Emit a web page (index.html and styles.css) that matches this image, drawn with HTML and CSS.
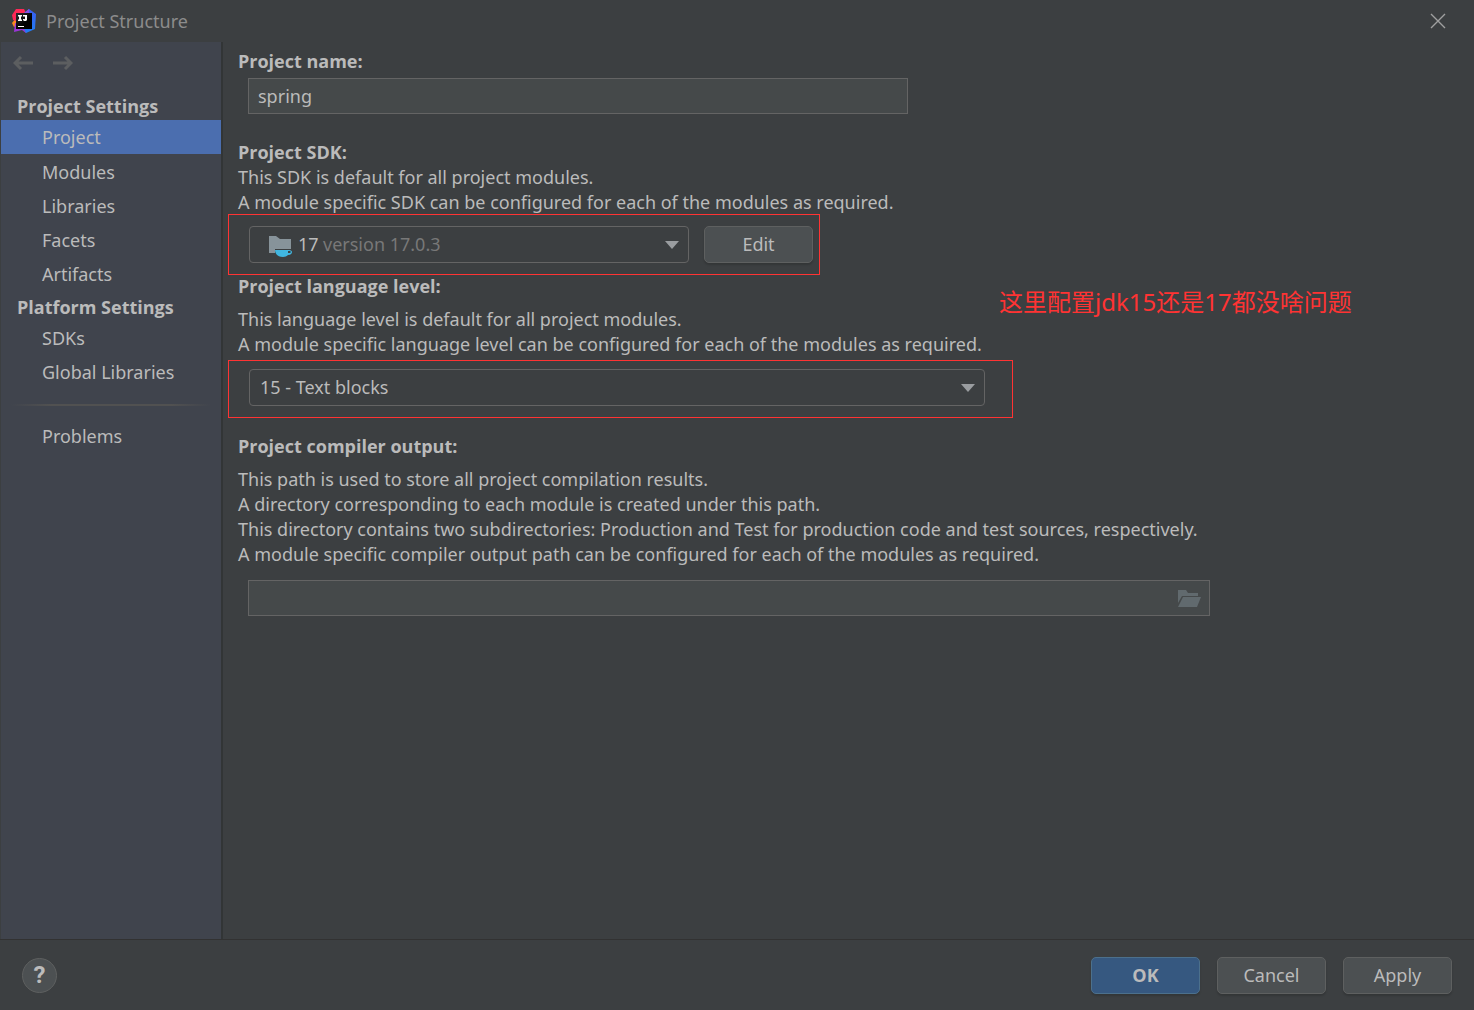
FILE: index.html
```html
<!DOCTYPE html>
<html lang="en">

<head>
    <meta charset="UTF-8">
    <meta name="viewport" content="width=device-width, initial-scale=1.0">
    <title>Project Structure</title>
    <link rel="stylesheet" href="styles.css">
</head>

<body>

    <div class="dialog">
        <header class="titlebar">
            <svg class="logo" viewBox="0 0 24 24" aria-hidden="true">
                <defs>
                    <linearGradient id="logo-blue" x1="0" y1="0" x2="0" y2="1">
                        <stop offset="0" stop-color="#3b5cf0"/>
                        <stop offset="1" stop-color="#1f7df5"/>
                    </linearGradient>
                    <linearGradient id="logo-dark" x1="0" y1="0" x2="1" y2="1">
                        <stop offset="0" stop-color="#2c2c30"/>
                        <stop offset="0.6" stop-color="#000000"/>
                    </linearGradient>
                </defs>
                <path fill="#fb8b1c" d="M4 9 0 14 2 18 6 16z"/>
                <path fill="#fe2857" d="M4 0h8l3 6-9 7-5-2L0 6z"/>
                <path fill="#9a35d6" d="M3 14 2 23 10 21 14 24 18 16z"/>
                <path fill="url(#logo-blue)" d="M17 0 24 5 23 20 14 24 11 18 12 4z"/>
                <path fill="#8a4fe0" d="M17 0 11 5 17 6z"/>
                <rect x="4" y="4" width="16" height="16" fill="url(#logo-dark)"/>
                <path fill="#fff" d="M6 6h4v1.500H9v3h1V12H6v-1.500h1v-3H6zM11 6h4v5l-1 1h-2l-1-1v-1h1.500l.5.5V7.500h-2zM6 17h6v1H6z"/>
            </svg>
            <h1 class="title">Project Structure</h1>
            <button class="close" aria-label="Close">
                <svg viewBox="0 0 16 16" width="16" height="16"><path d="M1 1 15 15M15 1 1 15"/></svg>
            </button>
        </header>

        <div class="body">
            <nav class="sidebar">
                <div class="history">
                    <button aria-label="Back">
                        <svg viewBox="0 0 20 16" width="20" height="16"><path d="M20 8H2M8 2 2 8l6 6"/></svg>
                    </button>
                    <button aria-label="Forward">
                        <svg viewBox="0 0 20 16" width="20" height="16"><path d="M0 8h18M12 2l6 6-6 6"/></svg>
                    </button>
                </div>
                <h2>Project Settings</h2>
                <ul>
                    <li><a href="#" class="current">Project</a></li>
                    <li><a href="#">Modules</a></li>
                    <li><a href="#">Libraries</a></li>
                    <li><a href="#">Facets</a></li>
                    <li><a href="#">Artifacts</a></li>
                </ul>
                <h2>Platform Settings</h2>
                <ul>
                    <li><a href="#">SDKs</a></li>
                    <li><a href="#">Global Libraries</a></li>
                </ul>
                <hr>
                <ul>
                    <li><a href="#">Problems</a></li>
                </ul>
            </nav>

            <main class="content">
                <section class="group">
                    <label class="heading" for="name">Project name:</label>
                    <input class="field name" id="name" type="text" value="spring">
                </section>

                <section class="group group-sdk">
                    <label class="heading" for="sdk">Project SDK:</label>
                    <p>This SDK is default for all project modules.<br>
                        A module specific SDK can be configured for each of the modules as required.</p>
                    <div class="marked marked-sdk">
                        <div class="combo combo-sdk">
                            <select id="sdk">
                                <option>17</option>
                            </select>
                            <span class="sdk-icon">
                                <svg viewBox="0 0 24 22" width="24" height="22" aria-hidden="true">
                                    <path fill="#87939a" d="M0 0h7l4 3h11v10H6v4H0z"/>
                                    <path fill="#40b6e0" fill-rule="evenodd" d="M6 14h14c2 0 3 1 3 2s-1 3-4 3c-1 1-3 2-5 2-5 0-8-3-8-7zm13 1v2h2l1-1-1-1z"/>
                                </svg>
                            </span>
                            <span class="sdk-version">version 17.0.3</span>
                            <svg class="arrow" viewBox="0 0 14 8" width="14" height="8"><path d="M0 0h14L7 8z"/></svg>
                        </div>
                        <button class="btn">Edit</button>
                    </div>
                </section>

                <section class="group group-level">
                    <label class="heading" for="level">Project language level:</label>
                    <p class="spaced">This language level is default for all project modules.<br>
                        A module specific language level can be configured for each of the modules as required.</p>
                    <div class="marked marked-level">
                        <div class="combo combo-level">
                            <select id="level">
                                <option>15 - Text blocks</option>
                            </select>
                            <svg class="arrow" viewBox="0 0 14 8" width="14" height="8"><path d="M0 0h14L7 8z"/></svg>
                        </div>
                    </div>
                </section>

                <section class="group group-output">
                    <label class="heading" for="output">Project compiler output:</label>
                    <p class="spaced">This path is used to store all project compilation results.<br>
                        A directory corresponding to each module is created under this path.<br>
                        This directory contains two subdirectories: Production and Test for production code and test sources, respectively.<br>
                        A module specific compiler output path can be configured for each of the modules as required.</p>
                    <div class="field path">
                        <input id="output" type="text">
                        <button class="browse" aria-label="Browse">
                            <svg viewBox="0 0 23 17" width="23" height="17"><path d="M0 0h8l2 3h10v3H4L0 13zM5 7h18l-4 10H0z"/></svg>
                        </button>
                    </div>
                </section>

                <div class="note" lang="zh">这里配置jdk15还是17都没啥问题</div>
            </main>
        </div>

        <footer class="footer">
            <button class="help" aria-label="Help">?</button>
            <div class="actions">
                <button class="btn btn-primary">OK</button>
                <button class="btn">Cancel</button>
                <button class="btn">Apply</button>
            </div>
        </footer>
    </div>

</body>

</html>
```
FILE: styles.css
```css
* {
    box-sizing: border-box;
}

body {
    margin: 0;
    background-color: #3c3f41;
    color: #bbbbbb;
    font-family: "Noto Sans", "Noto Sans CJK SC", sans-serif;
    font-size: 18px;
    line-height: 25px;
}

button,
input,
select {
    margin: 0;
    padding: 0;
    border: none;
    background: none;
    color: inherit;
    font: inherit;
}

svg {
    display: block;
}

.dialog {
    display: flex;
    flex-direction: column;
    min-height: 100vh;
}

/* Title bar */
.titlebar {
    display: flex;
    align-items: center;
    height: 42px;
    padding: 0 28px 0 12px;
}

.logo {
    width: 24px;
    height: 24px;
}

.title {
    flex: 1;
    margin: 0 0 0 10px;
    color: #8c8c8c;
    font-size: 18px;
    font-weight: normal;
}

.close path {
    stroke: #a0a0a0;
    stroke-width: 1.4;
}

.body {
    display: flex;
    flex: 1;
}

/* Sidebar */
.sidebar {
    flex: none;
    width: 223px;
    border-left: 1px solid #3c3f41;
    border-right: 2px solid #323536;
    background-color: #40444d;
}

.history {
    display: flex;
    align-items: center;
    gap: 20px;
    height: 42px;
    margin-bottom: 10px;
    padding-left: 12px;
}

.history path {
    fill: none;
    stroke: #5c5e60;
    stroke-width: 3;
}

.sidebar h2 {
    margin: 4px 0 1px;
    padding-left: 16px;
    font-family: "Open Sans", sans-serif;
    font-size: 18px;
    font-weight: bold;
}

.history + h2 {
    margin-top: 0;
}

.sidebar ul {
    margin: 0;
    padding: 0;
    list-style: none;
}

.sidebar a {
    display: block;
    padding-left: 41px;
    color: inherit;
    line-height: 34px;
    text-decoration: none;
}

.sidebar a.current {
    margin-bottom: 1px;
    background-color: #4b6eaf;
}

.sidebar hr {
    height: 2px;
    margin: 15px 10px 13px;
    border: none;
    background: linear-gradient(to right, transparent, #515151 20%, #515151 80%, transparent);
}

/* Settings */
.content {
    position: relative;
    flex: 1;
    min-width: 0;
    padding: 7px 15px 24px;
}

.group-sdk {
    margin-top: 26px;
}

.group-level {
    margin-top: -1px;
}

.group-output {
    margin-top: 16px;
}

.heading {
    display: block;
    font-family: "Open Sans", sans-serif;
    font-weight: bold;
}

.group p {
    margin: 0;
}

.group p.spaced {
    margin-top: 8px;
}

.field {
    display: block;
    height: 36px;
    margin-left: 10px;
    border: 1px solid #646464;
    background-color: #45494a;
}

.name {
    width: 660px;
    max-width: 100%;
    margin-top: 4px;
    padding: 0 9px;
}

.path {
    display: flex;
    align-items: center;
    width: 962px;
    max-width: 100%;
    margin-top: 13px;
    padding: 0 8px;
}

.path input {
    flex: 1;
}

.browse path {
    fill: #616a6e;
}

/* Red frame round a row */
.marked {
    display: flex;
    width: fit-content;
    max-width: 100%;
    margin-left: -10px;
    border: 1px solid #ff3333;
}

.marked-sdk {
    gap: 15px;
    margin-top: -1px;
    padding: 11px 6px 11px 20px;
}

.marked-level {
    margin-top: 3px;
    padding: 8px 27px 11px 20px;
}

.combo {
    position: relative;
}

.combo-sdk {
    width: 440px;
}

.combo-level {
    width: 736px;
}

.combo select {
    width: 100%;
    height: 37px;
    padding: 0 10px;
    border: 1px solid #646464;
    border-radius: 4px;
    appearance: none;
}

.combo-sdk select {
    padding-left: 48px;
}

.sdk-icon,
.sdk-version,
.arrow {
    position: absolute;
    pointer-events: none;
}

.sdk-icon {
    top: 10px;
    left: 20px;
}

.sdk-version {
    top: 6px;
    left: 74px;
    color: #787878;
}

.arrow {
    top: 15px;
    right: 10px;
    fill: #9a9da0;
}

.btn {
    width: 109px;
    height: 37px;
    border: 1px solid #5e6060;
    border-radius: 5px;
    background-color: #4c5052;
    box-shadow: 0 2px 2px rgba(0, 0, 0, 0.15);
}

.btn-primary {
    border-color: #4c708c;
    background-color: #365880;
    font-family: "Open Sans", sans-serif;
    font-weight: bold;
}

.note {
    position: absolute;
    top: 242px;
    left: 776px;
    color: #ff3333;
    font-size: 24px;
    line-height: 36px;
    white-space: nowrap;
}

/* Bottom bar */
.footer {
    display: flex;
    align-items: center;
    justify-content: space-between;
    height: 71px;
    padding: 0 22px;
    border-top: 1px solid #323232;
}

.help {
    width: 35px;
    height: 35px;
    border: 1px solid #5e6060;
    border-radius: 50%;
    background-color: #4c5052;
    font-family: Roboto, sans-serif;
    font-size: 24px;
    font-weight: bold;
}

.actions {
    display: flex;
    gap: 17px;
}
```
